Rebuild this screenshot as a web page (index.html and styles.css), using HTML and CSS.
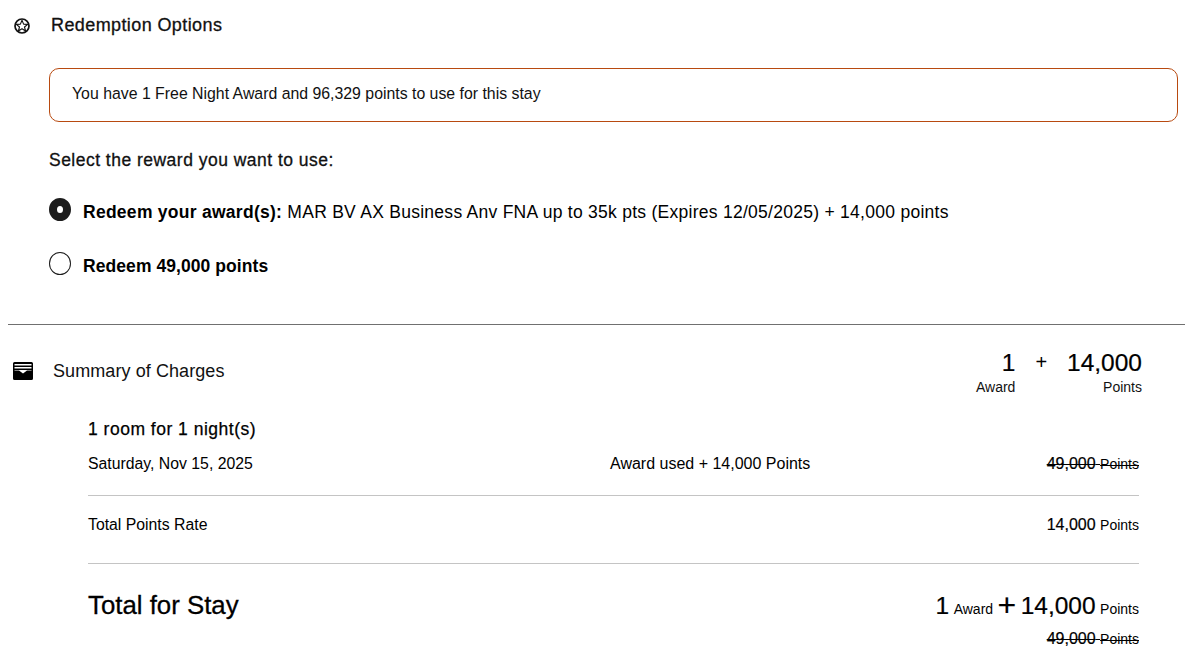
FILE: index.html
```html
<!DOCTYPE html>
<html lang="en">
<head>
<meta charset="utf-8">
<title>Redemption Options</title>
<link rel="stylesheet" href="styles.css">
</head>
<body>
<section class="redemption">
  <header class="section-head">
    <svg class="star-icon" viewBox="0 0 16 16" aria-hidden="true"><circle cx="8" cy="8" r="7" fill="none" stroke="#111" stroke-width="1.700"/><path d="M8 2.300l1.600 3.800 4.100.3-3.200 2.600 1.100 4L8 10.800l-3.600 2.200 1.100-4-3.200-2.600 4.100-.3z" fill="none" stroke="#111" stroke-width="1.100" stroke-linejoin="round"/></svg>
    <h2 class="section-title">Redemption Options</h2>
  </header>
  <div class="notice">You have 1 Free Night Award and 96,329 points to use for this stay</div>
  <p class="select-label">Select the reward you want to use:</p>
  <div class="option option-first"><span class="radio radio-on"></span><span class="option-text"><b class="award-label">Redeem your award(s):</b> MAR BV AX Business Anv FNA up to 35k pts (Expires 12/05/2025) + 14,000 points</span></div>
  <div class="option option-second"><span class="radio"></span><span class="option-text"><b>Redeem 49,000 points</b></span></div>
</section>
<section class="summary">
  <header class="summary-head">
    <svg class="tray-icon" viewBox="0 0 20 18" aria-hidden="true"><path fill-rule="evenodd" d="M1.500 0h17A1.500 1.500 0 0 1 20 1.500v15a1.500 1.500 0 0 1-1.500 1.500h-17A1.500 1.500 0 0 1 0 16.500v-15A1.500 1.500 0 0 1 1.500 0z M1.500 2v1.500h17V2z M1.500 5v1.500h17V5z M1.500 8v.5h4.500L10 11.500l4-3h4.500V8z" fill="#000"/></svg>
    <h2 class="summary-title">Summary of Charges</h2>
    <div class="head-totals">
      <div class="head-col"><span class="head-num">1</span><span class="head-unit">Award</span></div>
      <span class="head-plus">+</span>
      <div class="head-col"><span class="head-num">14,000</span><span class="head-unit">Points</span></div>
    </div>
  </header>
  <div class="details">
    <h3 class="room-title">1 room for 1 night(s)</h3>
    <div class="row row-night">
      <span class="row-date">Saturday, Nov 15, 2025</span>
      <span class="row-mid">Award used + 14,000 Points</span>
      <span class="row-end"><s><span class="num">49,000</span> <span class="unit">Points</span></s></span>
    </div>
    <div class="row row-rate">
      <span class="row-date">Total Points Rate</span>
      <span class="row-end"><span class="num">14,000</span> <span class="unit">Points</span></span>
    </div>
    <div class="total">
      <span class="total-title">Total for Stay</span>
      <div class="total-values">
        <div class="total-line"><span class="big">1</span> <span class="unit">Award</span> <span class="big plus-big">+</span> <span class="big">14,000</span> <span class="unit">Points</span></div>
        <div class="total-old"><s><span class="num">49,000</span> <span class="unit">Points</span></s></div>
      </div>
    </div>
  </div>
</section>
</body>
</html>
```
FILE: styles.css
```css
* { box-sizing: border-box; }
html, body { margin: 0; padding: 0; background: #fff; }
body { font-family: "Liberation Sans", Arial, sans-serif; color: #111; width: 1185px; height: 670px; overflow: hidden; }
h2, h3, p { margin: 0; font-weight: normal; }

.redemption { padding: 16px 0 0 14px; height: 324px; }
.section-head { display: flex; align-items: center; height: 19px; }
.star-icon { width: 16px; height: 16px; flex: none; }
.section-title { margin-left: 21px; font-size: 18px; line-height: 19px; letter-spacing: 0.4px; -webkit-text-stroke: 0.3px #111; }
.notice { margin: 33px 7px 0 35px; height: 54px; border: 1px solid #b84a10; border-radius: 10px; padding: 0 22px 2px; display: flex; align-items: center; font-size: 15.850px; }
.select-label { margin: 29px 0 0 35px; font-size: 17.500px; line-height: 19px; letter-spacing: 0.48px; -webkit-text-stroke: 0.3px #111; }
.option { display: flex; align-items: flex-start; margin-left: 35px; color: #000; height: 23px; }
.option-first { margin-top: 28px; }
.option-second { margin-top: 31px; }
.radio { width: 22px; height: 23px; border-radius: 50%; border: 1px solid #1c1c1c; flex: none; background: #fff; }
.radio-on { border: 8px solid #1c1c1c; }
.option-text { margin: 4px 0 0 12px; font-size: 17.500px; line-height: 20px; letter-spacing: 0.07px; }
.option-first .option-text { letter-spacing: 0.27px; }

.summary { margin-left: 8px; border-top: 1px solid #707070; padding-top: 26px; }
.summary-head { display: flex; height: 49px; padding-right: 43px; }
.tray-icon { width: 20px; height: 18px; margin: 11px 0 0 5px; flex: none; }
.summary-title { margin: 9px 0 0 20px; font-size: 18px; line-height: 22px; letter-spacing: 0.08px; flex: 1; }
.head-totals { display: flex; color: #000; }
.head-col { display: flex; flex-direction: column; align-items: flex-end; }
.head-num { font-size: 24.500px; line-height: 24px; -webkit-text-stroke: 0.2px #000; }
.head-unit { font-size: 14px; line-height: 15px; margin-top: 5px; color: #111; }
.head-plus { font-size: 20px; line-height: 22px; margin: 0 20px; }

.details { margin: 0 46px 0 80px; color: #000; }
.room-title { margin-top: 20px; font-size: 17.500px; line-height: 19px; letter-spacing: 0.5px; -webkit-text-stroke: 0.25px #000; }
.row { display: grid; grid-template-columns: 522px 1fr auto; align-items: baseline; font-size: 16px; }
.row-date { font-size: 15.800px; }
.row-night { padding: 16px 0 22px; border-bottom: 1px solid #c4c4c4; line-height: 17px; }
.row-rate { padding: 20px 0 29px; border-bottom: 1px solid #c4c4c4; line-height: 17px; }
.row-end { grid-column: 3; }
.num { font-size: 16px; -webkit-text-stroke: 0.2px #000; }
.unit { font-size: 14px; }
.total { display: flex; justify-content: space-between; padding-top: 27px; }
.total-title { font-size: 25.800px; line-height: 28px; -webkit-text-stroke: 0.3px #000; }
.total-values { text-align: right; }
.total-line { line-height: 28px; margin-top: 1px; }
.big { font-size: 24.500px; line-height: 28px; -webkit-text-stroke: 0.2px #000; }
.plus-big { font-size: 32px; line-height: 0; vertical-align: -2px; }
.total-old { margin-top: 7px; line-height: 17px; }
```
